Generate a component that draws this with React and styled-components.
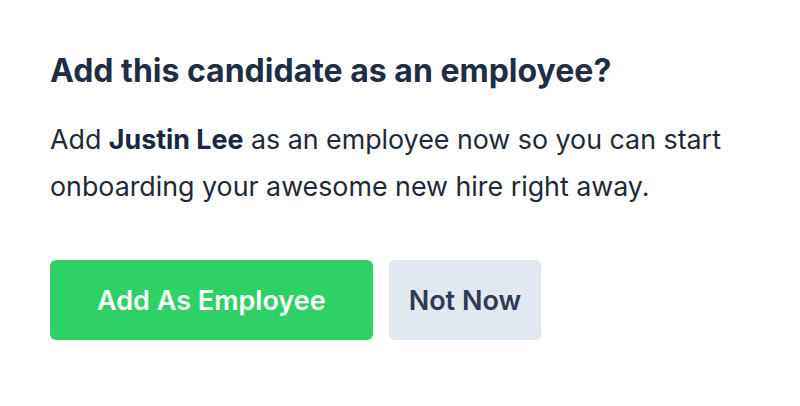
import React from 'react';
import styled, {createGlobalStyle} from 'styled-components';

const GlobalStyle = createGlobalStyle`
  body {
    margin: 0;
    background: #ffffff;
    font-family: Inter, "Noto Sans", sans-serif;
  }
`;

const Dialog = styled.div`
  padding: 52px 50px;
`;

const Title = styled.h2`
  margin: 0 0 26px;
  font-size: 32px;
  font-weight: 700;
  line-height: 38px;
  color: #1f2d45;
`;

const Body = styled.p`
  margin: 0;
  font-size: 26.8px;
  line-height: 47px;
  color: #1f2937;

  strong {
    font-weight: 700;
    color: #1a2740;
  }
`;

const Actions = styled.div`
  display: flex;
  gap: 16px;
  margin-top: 50px;
`;

const Button = styled.button`
  height: 80px;
  padding: 0 ${props => props.$primary ? '47px' : '20px'};
  border: none;
  border-radius: 6px;
  font-family: inherit;
  font-size: 27px;
  font-weight: 600;
  background: ${props => props.$primary ? '#2ed164' : '#e2e8f0'};
  color: ${props => props.$primary ? '#ffffff' : '#2f3b52'};
  cursor: pointer;
`;

export default function App() {
  return (
    <>
      <GlobalStyle />
      <Dialog>
        <Title>Add this candidate as an employee?</Title>
        <Body>
          Add <strong>Justin Lee</strong> as an employee now so you can start<br />
          onboarding your awesome new hire right away.
        </Body>
        <Actions>
          <Button $primary>Add As Employee</Button>
          <Button>Not Now</Button>
        </Actions>
      </Dialog>
    </>
  );
}
